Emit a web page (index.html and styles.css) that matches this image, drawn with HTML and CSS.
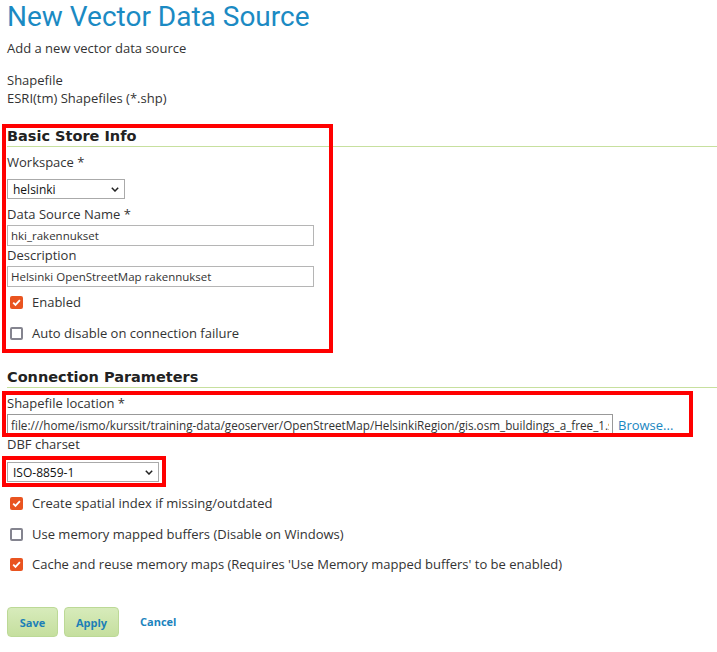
FILE: index.html
```html
<!DOCTYPE html>
<html lang="en">
<head>
<meta charset="utf-8">
<title>New Vector Data Source</title>
<link rel="stylesheet" href="styles.css">
</head>
<body>
<div class="page">
  <h1 class="title">New Vector Data Source</h1>
  <p class="intro">Add a new vector data source</p>
  <p class="type">Shapefile<br>ESRI(tm) Shapefiles (*.shp)</p>

  <div class="group group-basic">
    <h3 class="section">Basic Store Info</h3>
    <div class="label label-first">Workspace *</div>
    <div class="select-wrap select-ws">
      <select class="select"><option>helsinki</option></select>
      <svg class="chev" width="8" height="5" viewBox="0 0 8 5"><path d="M0.8 0.8 L4 4 L7.2 0.8" fill="none" stroke="#222" stroke-width="1.5"/></svg>
    </div>
    <div class="label label-ds">Data Source Name *</div>
    <input class="text-input input-short" type="text" value="hki_rakennukset">
    <div class="label label-desc">Description</div>
    <input class="text-input input-short" type="text" value="Helsinki OpenStreetMap rakennukset">
    <div class="check-row row-enabled">
      <span class="cb cb-on"><svg width="13" height="13" viewBox="0 0 13 13"><path d="M3.2 6.6 L5.5 8.9 L9.9 4.2" fill="none" stroke="#fff" stroke-width="1.8"/></svg></span>
      <span>Enabled</span>
    </div>
    <div class="check-row row-gap">
      <span class="cb cb-off"></span>
      <span>Auto disable on connection failure</span>
    </div>
    <div class="annot annot-basic"></div>
  </div>

  <h3 class="section section-conn">Connection Parameters</h3>
  <div class="group group-loc">
    <div class="label">Shapefile location *</div>
    <div class="file-row">
      <input class="text-input input-long" type="text" value="file:///home/ismo/kurssit/training-data/geoserver/OpenStreetMap/HelsinkiRegion/gis.osm_buildings_a_free_1.shp">
      <a class="browse" href="#">Browse...</a>
    </div>
    <div class="annot annot-loc"></div>
  </div>
  <div class="label label-dbf">DBF charset</div>
  <div class="select-wrap select-cs">
    <select class="select"><option>ISO-8859-1</option></select>
    <svg class="chev" width="8" height="5" viewBox="0 0 8 5"><path d="M0.8 0.8 L4 4 L7.2 0.8" fill="none" stroke="#222" stroke-width="1.5"/></svg>
    <div class="annot annot-cs"></div>
  </div>

  <div class="check-row row-create">
    <span class="cb cb-on"><svg width="13" height="13" viewBox="0 0 13 13"><path d="M3.2 6.6 L5.5 8.9 L9.9 4.2" fill="none" stroke="#fff" stroke-width="1.8"/></svg></span>
    <span>Create spatial index if missing/outdated</span>
  </div>
  <div class="check-row row-gap">
    <span class="cb cb-off"></span>
    <span>Use memory mapped buffers (Disable on Windows)</span>
  </div>
  <div class="check-row row-gap2">
    <span class="cb cb-on"><svg width="13" height="13" viewBox="0 0 13 13"><path d="M3.2 6.6 L5.5 8.9 L9.9 4.2" fill="none" stroke="#fff" stroke-width="1.8"/></svg></span>
    <span>Cache and reuse memory maps (Requires 'Use Memory mapped buffers' to be enabled)</span>
  </div>

  <div class="buttons">
    <button class="btn btn-save">Save</button>
    <button class="btn btn-apply">Apply</button>
    <a class="cancel" href="#">Cancel</a>
  </div>
</div>
</body>
</html>
```
FILE: styles.css
```css
* { box-sizing: border-box; }
html, body { margin: 0; padding: 0; background: #fff; }
body {
  font-family: "Open Sans", "Noto Sans", sans-serif;
  font-size: 13px;
  line-height: 16px;
  color: #333;
}
.page { padding: 0 0 0 7px; }

.title {
  margin: 0;
  font-family: Roboto, "Open Sans", sans-serif;
  font-size: 28px;
  line-height: 33px;
  font-weight: 400;
  color: #1b8ac3;
}
.intro { margin: 7px 0 0; }
.type { margin: 15px 0 0; line-height: 18px; }

.group { position: relative; }
.group-basic { margin-top: 20px; }

.section {
  margin: 0;
  font-family: "DejaVu Sans", "Open Sans", sans-serif;
  font-size: 14.5px;
  line-height: 18px;
  font-weight: 700;
  color: #222;
  padding-bottom: 1px;
  border-bottom: 1px solid #c7e09e;
}
.section-conn { margin-top: 27px; }

.label-first { margin-top: 7px; }
.label-ds { margin-top: 7px; }
.label-desc { margin-top: 1px; }
.label-dbf { margin-top: 1px; }
.group-loc { margin-top: 7px; }

.select-wrap { position: relative; display: inline-block; vertical-align: top; }
.select-ws { margin-top: 9px; width: 118px; display: block; }
.select-cs { margin-top: 10px; width: 152px; display: block; }
.select {
  -webkit-appearance: none;
  appearance: none;
  display: block;
  width: 100%;
  height: 20px;
  margin: 0;
  padding: 0 0 0 5px;
  border: 1px solid #aaa;
  border-radius: 0;
  background: #fff;
  font-family: "Open Sans", "Noto Sans", sans-serif;
  font-size: 12px;
  color: #111;
}
.chev { position: absolute; right: 6px; top: 8px; pointer-events: none; }

.text-input {
  display: block;
  height: 21px;
  margin: 3px 0 0;
  padding: 0 3px;
  border: 1px solid #b5b5b5;
  background: #fff;
  font-family: "Open Sans", "Noto Sans", sans-serif;
  font-size: 11.5px;
  color: #333;
}
.input-short { width: 307px; }
.input-long { width: 606px; margin: 0; border-color: #999; font-size: 11.7px; }

.file-row { display: flex; align-items: center; gap: 5px; margin-top: 3px; }
.browse { color: #1a86bf; text-decoration: none; }

.check-row { display: flex; align-items: center; gap: 9px; padding-left: 3px; height: 16px; }
.row-enabled { margin-top: 7px; }
.row-gap { margin-top: 15px; }
.row-gap2 { margin-top: 14px; }
.row-create { margin-top: 13px; }

.cb {
  width: 13px;
  height: 13px;
  border-radius: 2px;
  flex: none;
  display: block;
}
.cb svg { display: block; }
.cb-on { background: #e95420; }
.cb-off { border: 2px solid #84848f; background: #fff; }

.buttons { display: flex; align-items: center; margin-top: 35px; }
.btn {
  height: 30px;
  border: 1px solid #bcd996;
  border-radius: 4px;
  background: linear-gradient(#d7ebbb, #c5df9e);
  font-family: "Open Sans", "Noto Sans", sans-serif;
  font-size: 11px;
  font-weight: 700;
  color: #1c7fb7;
  padding: 0;
}
.btn-save { width: 51px; }
.btn-apply { width: 55px; margin-left: 6px; }
.cancel {
  margin-left: 21px;
  font-size: 11px;
  font-weight: 700;
  color: #1c83bd;
  text-decoration: none;
}

.annot { position: absolute; border: 4px solid #ff0000; pointer-events: none; }
.annot-basic { left: -5px; top: -3px; width: 331px; height: 229px; }
.annot-loc { left: -5px; top: -4px; width: 691px; height: 46px; }
.annot-cs { left: -5px; top: -6px; width: 164px; height: 31px; }
```
